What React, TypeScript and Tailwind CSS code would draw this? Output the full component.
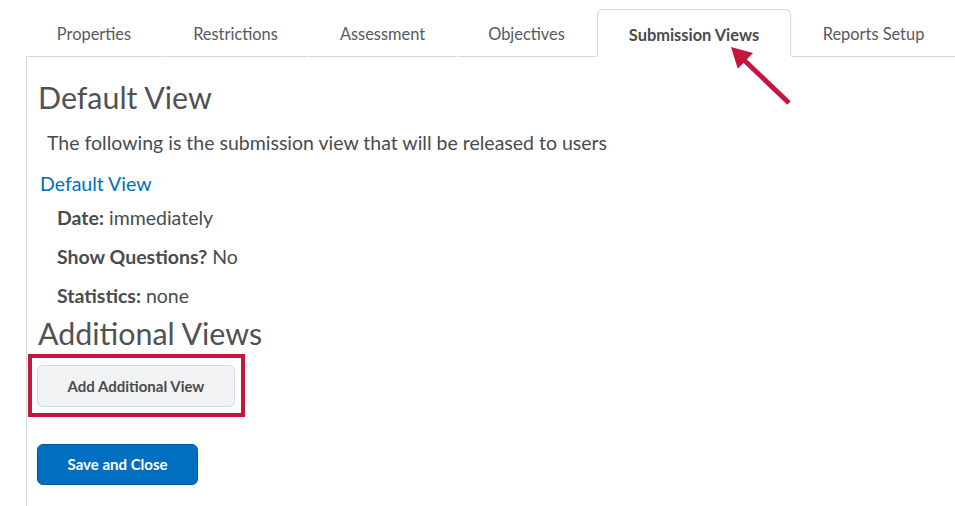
import clsx from 'clsx'

type Tab = {
  label: string
  width: string
  active?: boolean
}

const tabs: Tab[] = [
  { label: 'Properties', width: 'w-[136px]' },
  { label: 'Restrictions', width: 'w-[145px]' },
  { label: 'Assessment', width: 'w-[147px]' },
  { label: 'Objectives', width: 'w-[139px]' },
  { label: 'Submission Views', width: 'w-[194px]', active: true },
  { label: 'Reports Setup', width: 'flex-1' },
]

function TabStrip() {
  return (
    <div className="flex items-end gap-px pl-[26px] pt-[9px]">
      {tabs.map((tab) => (
        <div
          key={tab.label}
          className={clsx(
            'flex h-[48px] items-center justify-center pt-[4px] text-[16.4px]',
            tab.width,
            tab.active
              ? 'rounded-t-[6px] border border-b-0 border-[#d3d9e3] bg-white font-bold text-[#494c4e]'
              : 'border-b border-[#d3d9e3] text-[#565a5c]',
          )}
        >
          {tab.label}
        </div>
      ))}
    </div>
  )
}

function Detail({ label, value }: { label: string; value: string }) {
  return (
    <p className="ml-[30px] mt-[11px] text-[19.5px] leading-[28px] text-[#494c4e] first-of-type:mt-[6px]">
      <span className="font-bold">{label}</span> {value}
    </p>
  )
}

function Arrow() {
  return (
    <svg
      className="pointer-events-none absolute left-0 top-0"
      width="955"
      height="506"
      viewBox="0 0 955 506"
    >
      <line
        x1="789"
        y1="103"
        x2="744"
        y2="60"
        stroke="#c4173f"
        strokeWidth="5"
      />
      <polygon points="731,47 753,53 737.8,68.8" fill="#c4173f" />
    </svg>
  )
}

export default function App() {
  return (
    <div
      className="relative h-[506px] w-[955px] overflow-hidden bg-white"
      style={{ fontFamily: 'Lato, "Open Sans", sans-serif' }}
    >
      <TabStrip />

      <div className="ml-[26px] flex h-[449px] flex-col border-l border-[#d3d9e3]">
        <h1 className="ml-[11px] mt-[20px] text-[30.4px] leading-[40px] text-[#4f5254]">
          Default View
        </h1>
        <p className="ml-[20px] mt-[12px] text-[19.5px] leading-[28px] text-[#494c4e]">
          The following is the submission view that will be released to users
        </p>
        <a className="ml-[13px] mt-[13px] text-[19.5px] leading-[28px] text-[#006fbf]">
          Default View
        </a>
        <div>
          <Detail label="Date:" value="immediately" />
          <Detail label="Show Questions?" value="No" />
          <Detail label="Statistics:" value="none" />
        </div>

        <h2 className="ml-[11px] mt-[3px] text-[30.4px] leading-[40px] text-[#4f5254]">
          Additional Views
        </h2>

        <div className="ml-[1px] mt-[1px] h-[63px] w-[217px] border-4 border-[#c41640] pl-[5px] pt-[7px]">
          <button className="h-[42px] w-[198px] rounded-[6px] border border-[#d3d9e3] bg-[#f1f2f4] text-[15px] font-bold text-[#494c4e]">
            Add Additional View
          </button>
        </div>

        <button className="ml-[10px] mt-[27px] h-[41px] w-[161px] rounded-[6px] border border-[#005a9e] bg-[#006fbf] text-[15px] font-bold text-white">
          Save and Close
        </button>
      </div>

      <Arrow />
    </div>
  )
}
